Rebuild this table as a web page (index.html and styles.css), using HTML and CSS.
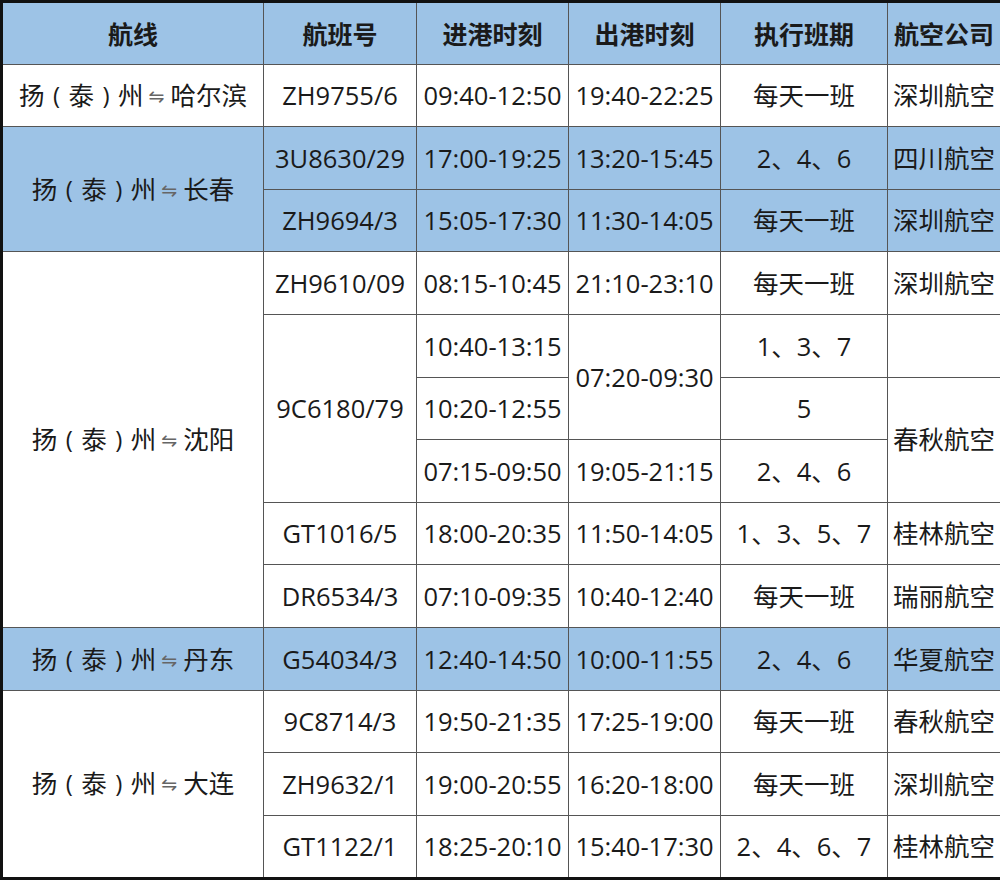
FILE: index.html
```html
<!DOCTYPE html>
<html lang="zh">
<head>
<meta charset="utf-8">
<title>航线</title>
<link rel="stylesheet" href="styles.css">
</head>
<body>
<table class="sched">
  <colgroup>
    <col class="c1"><col class="c2"><col class="c3"><col class="c4"><col class="c5"><col class="c6">
  </colgroup>
  <thead>
    <tr class="blue head">
      <th>航线</th><th>航班号</th><th>进港时刻</th><th>出港时刻</th><th>执行班期</th><th>航空公司</th>
    </tr>
  </thead>
  <tbody>
    <tr>
      <td>扬<span class="p">(</span>泰<span class="p">)</span>州<span class="arr">⇋</span>哈尔滨</td><td>ZH9755/6</td><td>09:40-12:50</td><td>19:40-22:25</td><td>每天一班</td><td>深圳航空</td>
    </tr>
    <tr class="blue">
      <td rowspan="2">扬<span class="p">(</span>泰<span class="p">)</span>州<span class="arr">⇋</span>长春</td><td>3U8630/29</td><td>17:00-19:25</td><td>13:20-15:45</td><td>2、4、6</td><td>四川航空</td>
    </tr>
    <tr class="blue">
      <td>ZH9694/3</td><td>15:05-17:30</td><td>11:30-14:05</td><td>每天一班</td><td>深圳航空</td>
    </tr>
    <tr>
      <td rowspan="6">扬<span class="p">(</span>泰<span class="p">)</span>州<span class="arr">⇋</span>沈阳</td><td>ZH9610/09</td><td>08:15-10:45</td><td>21:10-23:10</td><td>每天一班</td><td>深圳航空</td>
    </tr>
    <tr>
      <td rowspan="3">9C6180/79</td><td>10:40-13:15</td><td rowspan="2">07:20-09:30</td><td>1、3、7</td><td></td>
    </tr>
    <tr>
      <td>10:20-12:55</td><td>5</td><td rowspan="2">春秋航空</td>
    </tr>
    <tr>
      <td>07:15-09:50</td><td>19:05-21:15</td><td>2、4、6</td>
    </tr>
    <tr>
      <td>GT1016/5</td><td>18:00-20:35</td><td>11:50-14:05</td><td>1、3、5、7</td><td>桂林航空</td>
    </tr>
    <tr>
      <td>DR6534/3</td><td>07:10-09:35</td><td>10:40-12:40</td><td>每天一班</td><td>瑞丽航空</td>
    </tr>
    <tr class="blue">
      <td>扬<span class="p">(</span>泰<span class="p">)</span>州<span class="arr">⇋</span>丹东</td><td>G54034/3</td><td>12:40-14:50</td><td>10:00-11:55</td><td>2、4、6</td><td>华夏航空</td>
    </tr>
    <tr>
      <td rowspan="3">扬<span class="p">(</span>泰<span class="p">)</span>州<span class="arr">⇋</span>大连</td><td>9C8714/3</td><td>19:50-21:35</td><td>17:25-19:00</td><td>每天一班</td><td>春秋航空</td>
    </tr>
    <tr>
      <td>ZH9632/1</td><td>19:00-20:55</td><td>16:20-18:00</td><td>每天一班</td><td>深圳航空</td>
    </tr>
    <tr>
      <td>GT1122/1</td><td>18:25-20:10</td><td>15:40-17:30</td><td>2、4、6、7</td><td>桂林航空</td>
    </tr>
  </tbody>
</table>
</body>
</html>
```

FILE: styles.css
```css
html, body {
  margin: 0;
  padding: 0;
  background: #ffffff;
}

.sched {
  width: 1000px;
  table-layout: fixed;
  border-collapse: collapse;
  border: 3px solid #111111;
  font-family: "Open Sans", "Noto Sans CJK SC", sans-serif;
  font-size: 25.5px;
  color: #1a1a1a;
}

.c1 { width: 262px; }
.c2 { width: 153px; }
.c3 { width: 152px; }
.c4 { width: 152px; }
.c5 { width: 167px; }
.c6 { width: 114px; }

.sched tr {
  height: 62.62px;
}

.sched th,
.sched td {
  border: 1px solid #555555;
  padding: 0;
  text-align: center;
  vertical-align: middle;
  white-space: nowrap;
  overflow: hidden;
  line-height: 1.2;
}

.sched th {
  font-weight: bold;
  font-family: "Noto Sans CJK SC", sans-serif;
  font-size: 25px;
}

.blue {
  background: #9dc3e6;
}

.p {
  display: inline-block;
  width: 1em;
  text-align: center;
  font-family: "Open Sans", sans-serif;
  font-size: 24px;
  vertical-align: 1px;
}

.arr {
  display: inline-block;
  font-family: "DejaVu Sans", sans-serif;
  font-size: 19px;
  color: #666666;
  margin: 0 6px 0 5px;
  vertical-align: 2px;
}
```
